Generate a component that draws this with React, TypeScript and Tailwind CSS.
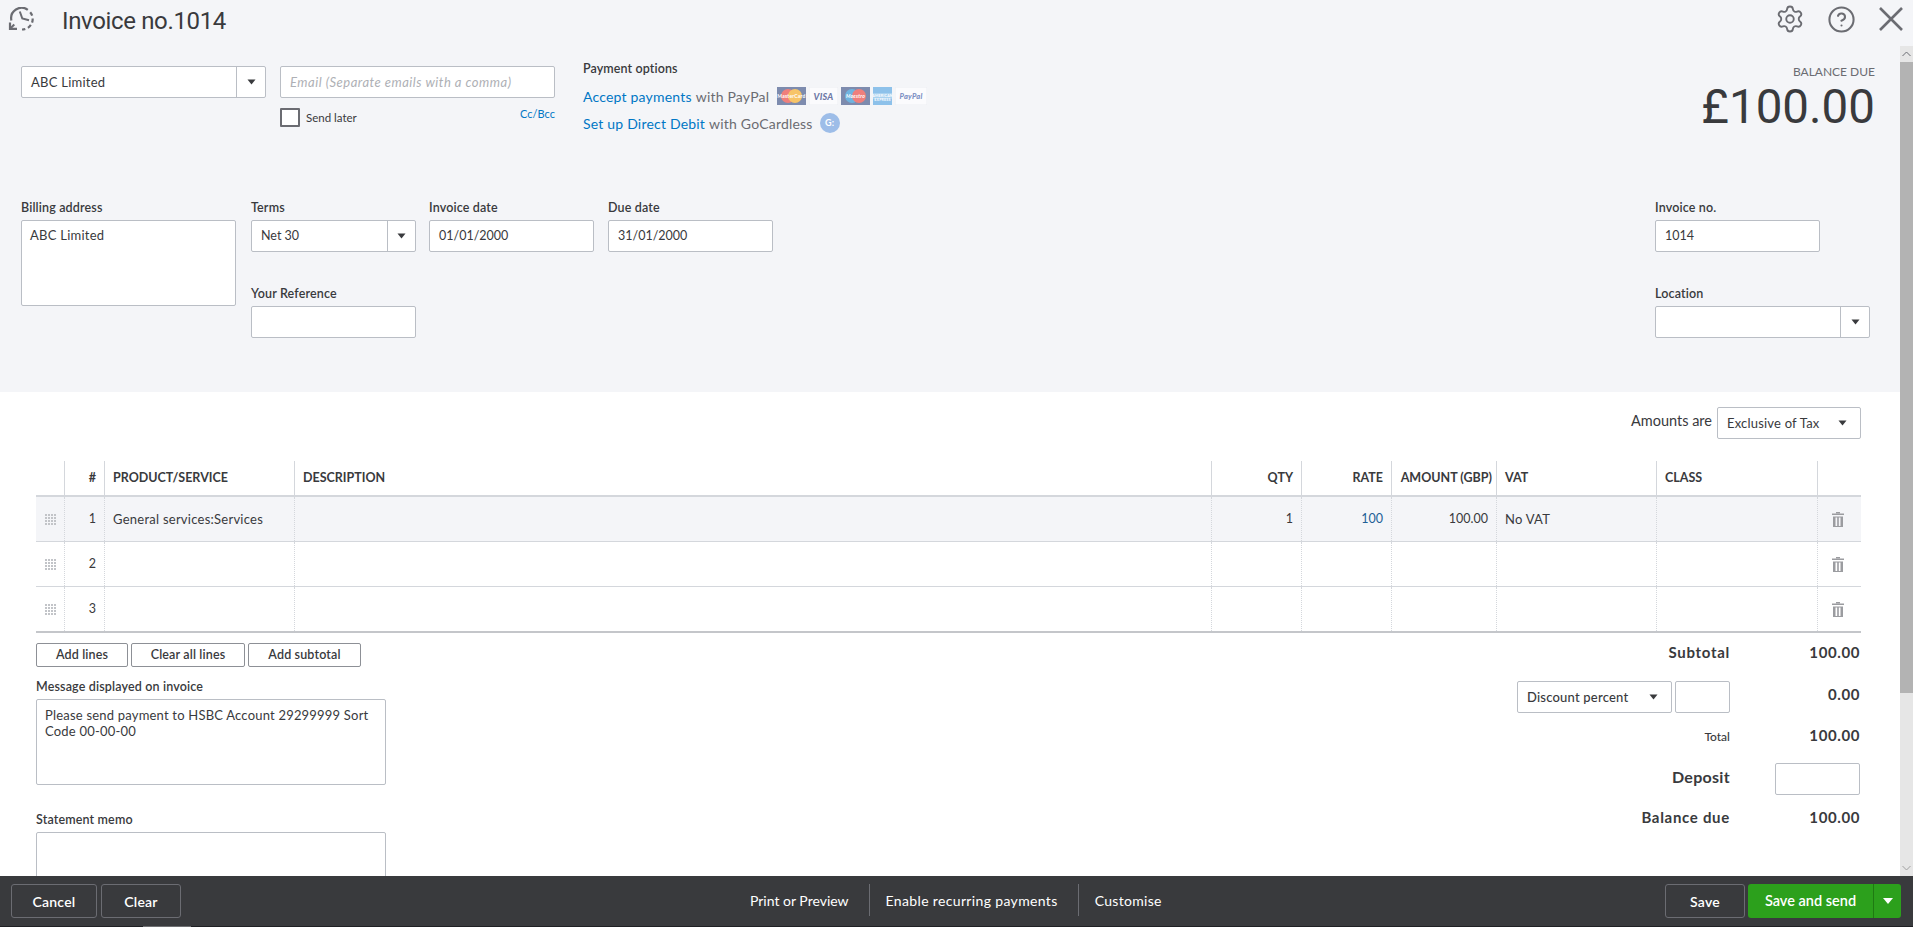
import React from "react";
import { Settings, CircleHelp } from "lucide-react";

const sans = "[font-family:Lato,'Open_Sans',sans-serif]";
const gridCols = "grid grid-cols-[29px_40px_190px_917px_90px_90px_105px_160px_161px_43px]";
const labelCls = "h-[20px] text-[12.5px] font-semibold leading-[16px] tracking-[0.15px] text-[#393a3d]";

function Caret({ className = "" }: { className?: string }) {
  return (
    <svg width="9" height="6" viewBox="0 0 9 6" className={className}>
      <path d="M0.5 0.5H8.5L4.5 5.5Z" fill="#393a3d" />
    </svg>
  );
}

function Field({ label, width, value = "", className = "" }: { label: string; width: string; value?: string; className?: string }) {
  return (
    <div className={`flex flex-col ${width} ${className}`}>
      <div className={labelCls}>{label}</div>
      <div className="h-[32px] rounded-[2px] border border-[#babec5] bg-white px-[9px] text-[12.5px] leading-[30px] text-[#393a3d]">{value}</div>
    </div>
  );
}

function Combo({ value, width, caretWidth, className = "", text = "text-[13px] tracking-[0.25px]" }: { value: string; width: string; caretWidth: string; className?: string; text?: string }) {
  return (
    <div className={`flex h-[32px] rounded-[2px] border border-[#babec5] bg-white ${width} ${className}`}>
      <div className={`flex-1 px-[9px] leading-[30px] text-[#393a3d] ${text}`}>{value}</div>
      <div className={`flex items-center justify-center border-l border-[#babec5] ${caretWidth}`}>
        <Caret />
      </div>
    </div>
  );
}

function HistoryIcon() {
  return (
    <svg width="26" height="25" viewBox="0 0 26 25" fill="none" stroke="#6b6c72" strokeWidth="2.2">
      <path d="M3.4 13.5A10.5 10.5 0 0 1 19.8 2.8" />
      <path d="M22.2 5.2A10.5 10.5 0 0 1 14 22.5" strokeDasharray="4 2.8" />
      <path d="M2 15.5V21.8H9" />
      <path d="M2.3 21.5L6.3 17.5" strokeWidth="2" />
      <path d="M11.8 4.5L14.3 11.5L21 13.3" strokeWidth="2" />
    </svg>
  );
}

function DragHandle() {
  const dots: React.ReactNode[] = [];
  for (let r = 0; r < 4; r++) {
    for (let c = 0; c < 4; c++) {
      dots.push(<rect key={`${r}-${c}`} x={c * 3} y={r * 3} width="2" height="2" fill="#c2c4c8" />);
    }
  }
  return (
    <svg width="11" height="11" viewBox="0 0 11 11">
      {dots}
    </svg>
  );
}

function Trash() {
  return (
    <svg width="12" height="15" viewBox="0 0 12 15">
      <rect x="4" y="0" width="4" height="1.5" fill="#9b9ca0" />
      <rect x="0" y="1.5" width="12" height="1.5" fill="#9b9ca0" />
      <path d="M1 4.5H11V15H1ZM3.5 5.5V14H5.2V5.5ZM6.8 5.5V14H8.5V5.5Z" fill="#9b9ca0" fillRule="evenodd" />
    </svg>
  );
}

function Cards() {
  return (
    <div className="ml-[8px] flex items-center gap-[3px]">
      <svg width="29" height="18" viewBox="0 0 29 18">
        <rect width="29" height="18" fill="#7d8bae" />
        <circle cx="11" cy="9" r="7" fill="#ef7f7c" />
        <circle cx="18" cy="9" r="7" fill="#f7c468" />
        <text x="14.5" y="11" textAnchor="middle" fontSize="5" fontWeight="700" fill="#fff" fontFamily="Lato, sans-serif">MasterCard</text>
      </svg>
      <svg width="29" height="18" viewBox="0 0 29 18">
        <rect width="29" height="18" fill="#fbfbfd" stroke="#eceef2" />
        <text x="14.5" y="12.5" textAnchor="middle" fontSize="9" fontWeight="900" fontStyle="italic" fill="#6d78a6" fontFamily="Lato, sans-serif">VISA</text>
      </svg>
      <svg width="29" height="18" viewBox="0 0 29 18">
        <rect width="29" height="18" fill="#7d8bae" />
        <circle cx="11" cy="9" r="7" fill="#6fb4e0" />
        <circle cx="18" cy="9" r="7" fill="#ef7f7c" />
        <text x="14.5" y="11" textAnchor="middle" fontSize="5" fontWeight="700" fontStyle="italic" fill="#fff" fontFamily="Lato, sans-serif">Maestro</text>
      </svg>
      <svg width="19" height="18" viewBox="0 0 19 18">
        <rect width="19" height="18" fill="#8dc1ea" />
        <rect y="6" width="19" height="6" fill="#a9d1ef" />
        <text x="9.5" y="10" textAnchor="middle" fontSize="3.6" fontWeight="700" fill="#fff" fontFamily="Lato, sans-serif">AMERICAN</text>
        <text x="9.5" y="14" textAnchor="middle" fontSize="3.6" fontWeight="700" fill="#fff" fontFamily="Lato, sans-serif">EXPRESS</text>
      </svg>
      <svg width="32" height="18" viewBox="0 0 32 18">
        <rect width="32" height="18" fill="#fbfbfd" stroke="#eceef2" />
        <text x="16" y="12" textAnchor="middle" fontSize="7.5" fontWeight="900" fontStyle="italic" fill="#7d90c4" fontFamily="Lato, sans-serif">PayPal</text>
      </svg>
    </div>
  );
}

const rows = [
  { n: "1", product: "General services:Services", qty: "1", rate: "100", amount: "100.00", vat: "No VAT", bg: "bg-[#f4f5f8]", border: "h-[45px] border-b border-[#d4d7dc]" },
  { n: "2", product: "", qty: "", rate: "", amount: "", vat: "", bg: "bg-white", border: "h-[45px] border-b border-[#d4d7dc]" },
  { n: "3", product: "", qty: "", rate: "", amount: "", vat: "", bg: "bg-white", border: "h-[46px] border-b-[2px] border-[#c4c6ca]" },
];

function Table() {
  const h = "flex items-center border-r border-[#d4d7dc] px-[8px] text-[12.5px] font-bold text-[#393a3d]";
  const c = "flex items-center border-r border-dotted border-[#d4d7dc] px-[8px] pt-[1px] text-[13px] tracking-[0.25px] text-[#393a3d]";
  const n = "flex items-center border-r border-dotted border-[#d4d7dc] px-[8px] pt-[1px] text-[12.5px] text-[#393a3d]";
  return (
    <div className="mt-[22px] w-[1825px]">
      <div className={`${gridCols} box-content h-[34px] border-b-[2px] border-[#d4d7dc]`}>
        <div className={h} />
        <div className={`${h} justify-end`}>#</div>
        <div className={h}>PRODUCT/SERVICE</div>
        <div className={h}>DESCRIPTION</div>
        <div className={`${h} justify-end`}>QTY</div>
        <div className={`${h} justify-end`}>RATE</div>
        <div className={`${h} justify-end whitespace-nowrap !px-[4px]`}>AMOUNT (GBP)</div>
        <div className={h}>VAT</div>
        <div className={h}>CLASS</div>
        <div className="" />
      </div>
      {rows.map((r) => (
        <div key={r.n} className={`${gridCols} ${r.bg} ${r.border}`}>
          <div className={`${c} justify-center !px-0`}>
            <DragHandle />
          </div>
          <div className={`${n} justify-end`}>{r.n}</div>
          <div className={c}>{r.product}</div>
          <div className={c} />
          <div className={`${n} justify-end`}>{r.qty}</div>
          <div className={`${n} justify-end !text-[#1f5f96]`}>{r.rate}</div>
          <div className={`${n} justify-end`}>{r.amount}</div>
          <div className={c}>{r.vat}</div>
          <div className={c} />
          <div className="flex items-center justify-center pr-[3px]">
            <Trash />
          </div>
        </div>
      ))}
    </div>
  );
}

function OutlineButton({ children, width }: { children: React.ReactNode; width: string }) {
  return (
    <button className={`flex h-[24px] items-center justify-center rounded-[2px] border border-[#8d9096] bg-white text-[12.5px] font-semibold tracking-[0.15px] text-[#393a3d] ${width}`}>
      {children}
    </button>
  );
}

function FooterButton({ children, width }: { children: React.ReactNode; width: string }) {
  return (
    <button className={`flex h-[34px] items-center justify-center rounded-[3px] border border-[#6b6c72] text-[14px] font-semibold tracking-[0.2px] text-white ${width}`}>
      {children}
    </button>
  );
}

function TotalRow({ label, labelClass, children, className }: { label?: string; labelClass?: string; children?: React.ReactNode; className: string }) {
  return (
    <div className={`flex items-center justify-end ${className}`}>
      {label ? <div className={labelClass}>{label}</div> : null}
      {children}
    </div>
  );
}

export default function App() {
  const val = "w-[130px] text-right text-[15px] font-bold tracking-[0.6px] text-[#393a3d]";
  const strong = "text-[15px] font-bold tracking-[0.7px] text-[#393a3d]";
  return (
    <div className={`flex h-[927px] w-[1913px] flex-col overflow-hidden bg-[#f4f5f8] ${sans}`}>
      <header className="flex h-[46px] shrink-0 items-start bg-[#f4f5f8]">
        <div className="ml-[8px] mt-[7px]">
          <HistoryIcon />
        </div>
        <h1 className="ml-[28px] mt-[5px] font-['Roboto',sans-serif] text-[24px] leading-[32px] tracking-[-0.35px] text-[#393a3d]">Invoice no.1014</h1>
        <div className="ml-auto mr-[9px] mt-[4px] flex h-[30px] items-center gap-[22px] text-[#6b6c72]">
          <Settings size={30} strokeWidth={1.5} />
          <CircleHelp size={29} strokeWidth={1.7} />
          <svg width="26" height="26" viewBox="0 0 26 26" stroke="#6b6c72" strokeWidth="2.6">
            <path d="M2 2L24 24M24 2L2 24" />
          </svg>
        </div>
      </header>

      <div className="flex min-h-0 flex-1">
        <main className="min-w-0 flex-1 overflow-hidden">
          <section className="h-[346px] bg-[#f4f5f8] pl-[21px] pt-[20px]">
            <div className="flex h-[134px]">
              <Combo value="ABC Limited" width="w-[245px]" caretWidth="w-[29px]" />
              <div className="ml-[14px] w-[275px]">
                <div className="h-[32px] rounded-[2px] border border-[#babec5] bg-white px-[9px] text-[13px] italic leading-[30px] tracking-[0.5px] text-[#aeb0b5]">
                  Email (Separate emails with a comma)
                </div>
                <div className="mt-[10px] flex items-start">
                  <div className="h-[19px] w-[20px] rounded-[1px] border-[2px] border-[#6b6c72] bg-white" />
                  <span className="ml-[6px] mt-[3px] text-[11.5px] leading-[14px] text-[#393a3d]">Send later</span>
                  <span className="ml-auto mt-[-1px] text-[11px] leading-[14px] text-[#0077c5]">Cc/Bcc</span>
                </div>
              </div>
              <div className="ml-[28px]">
                <div className="mt-[-6px] text-[12.5px] font-semibold leading-[18px] tracking-[0.1px] text-[#393a3d]">Payment options</div>
                <div className="mt-[5px] flex h-[26px] items-center text-[14px] tracking-[0.2px] text-[#6b6c72]">
                  <span className="text-[#0077c5]">Accept payments</span>
                  <span className="ml-[4px]">with PayPal</span>
                  <Cards />
                </div>
                <div className="mt-[1px] flex h-[26px] items-center text-[14px] tracking-[0.2px] text-[#6b6c72]">
                  <span className="text-[#0077c5]">Set up Direct Debit</span>
                  <span className="ml-[4px]">with GoCardless</span>
                  <span className="ml-[7px] flex h-[20px] w-[20px] items-center justify-center rounded-full bg-[#9dbde8] text-[9px] font-bold text-white">G:</span>
                </div>
              </div>
              <div className="ml-auto mr-[25px] mt-[-1px] flex flex-col items-end">
                <div className="text-[12px] leading-[14px] text-[#6b6c72]">BALANCE DUE</div>
                <div className="mt-[4px] font-['Roboto',sans-serif] text-[47.5px] font-normal leading-[48px] text-[#393a3d]">£100.00</div>
              </div>
            </div>
            <div className="flex">
              <div className="flex w-[215px] flex-col">
                <div className={labelCls}>Billing address</div>
                <div className="h-[86px] rounded-[2px] border border-[#babec5] bg-white px-[8px] py-[6px] text-[13px] leading-[16px] tracking-[0.25px] text-[#393a3d]">ABC Limited</div>
              </div>
              <div className="ml-[15px] flex flex-col">
                <div className="flex">
                  <div className="w-[165px]">
                    <div className={labelCls}>Terms</div>
                    <Combo value="Net 30" width="w-[165px]" caretWidth="w-[28px]" text="text-[12.5px]" />
                  </div>
                  <Field label="Invoice date" width="w-[165px]" value="01/01/2000" className="ml-[13px]" />
                  <Field label="Due date" width="w-[165px]" value="31/01/2000" className="ml-[14px]" />
                </div>
                <Field label="Your Reference" width="w-[165px]" className="mt-[34px]" />
              </div>
              <div className="ml-[882px] flex flex-col">
                <Field label="Invoice no." width="w-[165px]" value="1014" />
                <div className="mt-[34px] w-[215px]">
                  <div className={labelCls}>Location</div>
                  <Combo value="" width="w-[215px]" caretWidth="w-[29px]" />
                </div>
              </div>
            </div>
          </section>

          <section className="bg-white pl-[36px] pt-[15px]">
            <div className="flex h-[32px] w-[1825px] items-start justify-end">
              <span className="mr-[5px] mt-[5px] text-[14.5px] leading-[18px] text-[#393a3d]">Amounts are</span>
              <div className="flex h-[32px] w-[144px] items-center justify-between rounded-[2px] border border-[#babec5] bg-white pb-0 pl-[9px] pr-[13px] pt-[2px] text-[13px] tracking-[0.2px] text-[#393a3d]">
                Exclusive of Tax
                <Caret className="mt-[-3px]" />
              </div>
            </div>
            <Table />
            <div className="flex w-[1825px] items-start justify-between">
              <div className="w-[350px]">
                <div className="mt-[10px] flex gap-[3px]">
                  <OutlineButton width="w-[92px]">Add lines</OutlineButton>
                  <OutlineButton width="w-[114px]">Clear all lines</OutlineButton>
                  <OutlineButton width="w-[113px]">Add subtotal</OutlineButton>
                </div>
                <div className={`mt-[12px] ${labelCls}`}>Message displayed on invoice</div>
                <div className="h-[86px] rounded-[2px] border border-[#babec5] bg-white px-[8px] py-[7px] text-[13px] leading-[16px] tracking-[0.2px] text-[#393a3d]">
                  Please send payment to HSBC Account 29299999 Sort Code 00-00-00
                </div>
                <div className={`mt-[27px] ${labelCls}`}>Statement memo</div>
                <div className="h-[86px] rounded-[2px] border border-[#babec5] bg-white" />
              </div>
              <div className="mt-[7px] flex w-[345px] flex-col pr-[1px]">
                <TotalRow label="Subtotal" labelClass={strong} className="h-[24px]">
                  <div className={val}>100.00</div>
                </TotalRow>
                <TotalRow className="mt-[17px] h-[32px]">
                  <div className="flex h-[32px] w-[155px] items-center justify-between rounded-[2px] border border-[#babec5] pl-[9px] pr-[13px] pt-[2px] text-[13px] font-medium tracking-[0.2px] text-[#393a3d]">
                    Discount percent
                    <Caret className="mt-[-3px]" />
                  </div>
                  <div className="ml-[3px] h-[32px] w-[55px] rounded-[2px] border border-[#babec5]" />
                  <div className={`${val} mt-[-6px]`}>0.00</div>
                </TotalRow>
                <TotalRow label="Total" labelClass="text-[12px] font-medium text-[#393a3d] mt-[3px]" className="mt-[10px] h-[24px]">
                  <div className={val}>100.00</div>
                </TotalRow>
                <TotalRow label="Deposit" labelClass="text-[16px] font-bold tracking-[0.3px] text-[#393a3d] mt-[-5px]" className="mt-[16px] h-[32px]">
                  <div className="ml-[45px] h-[32px] w-[85px] rounded-[2px] border border-[#babec5]" />
                </TotalRow>
                <TotalRow label="Balance due" labelClass={strong} className="mt-[10px] h-[24px]">
                  <div className={val}>100.00</div>
                </TotalRow>
              </div>
            </div>
          </section>
        </main>

        <div className="flex w-[13px] shrink-0 flex-col bg-[#e6e6e6]">
          <div className="flex h-[16px] items-center justify-center bg-[#e6e6e6]">
            <svg width="9" height="6" viewBox="0 0 9 6" fill="none" stroke="#6b6c72">
              <path d="M0.5 5L4.5 1L8.5 5" />
            </svg>
          </div>
          <div className="h-[631px] bg-[#b3b3b3]" />
          <div className="mt-auto flex h-[16px] items-center justify-center">
            <svg width="9" height="6" viewBox="0 0 9 6" fill="none" stroke="#a0a0a0">
              <path d="M0.5 1L4.5 5L8.5 1" />
            </svg>
          </div>
        </div>
      </div>

      <footer className="flex h-[50px] shrink-0 items-start bg-[#393a3d] pl-[11px] pr-[12px] pt-[8px]">
        <div className="flex gap-[4px]">
          <FooterButton width="w-[86px]">Cancel</FooterButton>
          <FooterButton width="w-[80px]">Clear</FooterButton>
        </div>
        <div className="ml-[569px] flex h-[32px] items-center text-[14px] text-white">
          <span>Print or Preview</span>
          <span className="ml-[20px] mr-[16px] h-[32px] w-px bg-[#6b6c72]" />
          <span className="tracking-[0.35px]">Enable recurring payments</span>
          <span className="ml-[20px] mr-[16px] h-[32px] w-px bg-[#6b6c72]" />
          <span className="tracking-[0.3px]">Customise</span>
        </div>
        <div className="ml-auto flex gap-[3px]">
          <FooterButton width="w-[80px]">Save</FooterButton>
          <div className="flex h-[34px] w-[153px] overflow-hidden rounded-[3px] bg-[#2ca01c] text-white">
            <div className="flex flex-1 items-center justify-center text-[14.5px] font-semibold">Save and send</div>
            <div className="flex w-[28px] items-center justify-center border-l border-[#1f7a12]">
              <svg width="10" height="6" viewBox="0 0 10 6">
                <path d="M0 0H10L5 6Z" fill="#fff" />
              </svg>
            </div>
          </div>
        </div>
      </footer>
      <div className="h-px shrink-0 bg-[#1f2024]">
        <div className="ml-[143px] h-px w-[48px] bg-[#6f7073]" />
      </div>
    </div>
  );
}
